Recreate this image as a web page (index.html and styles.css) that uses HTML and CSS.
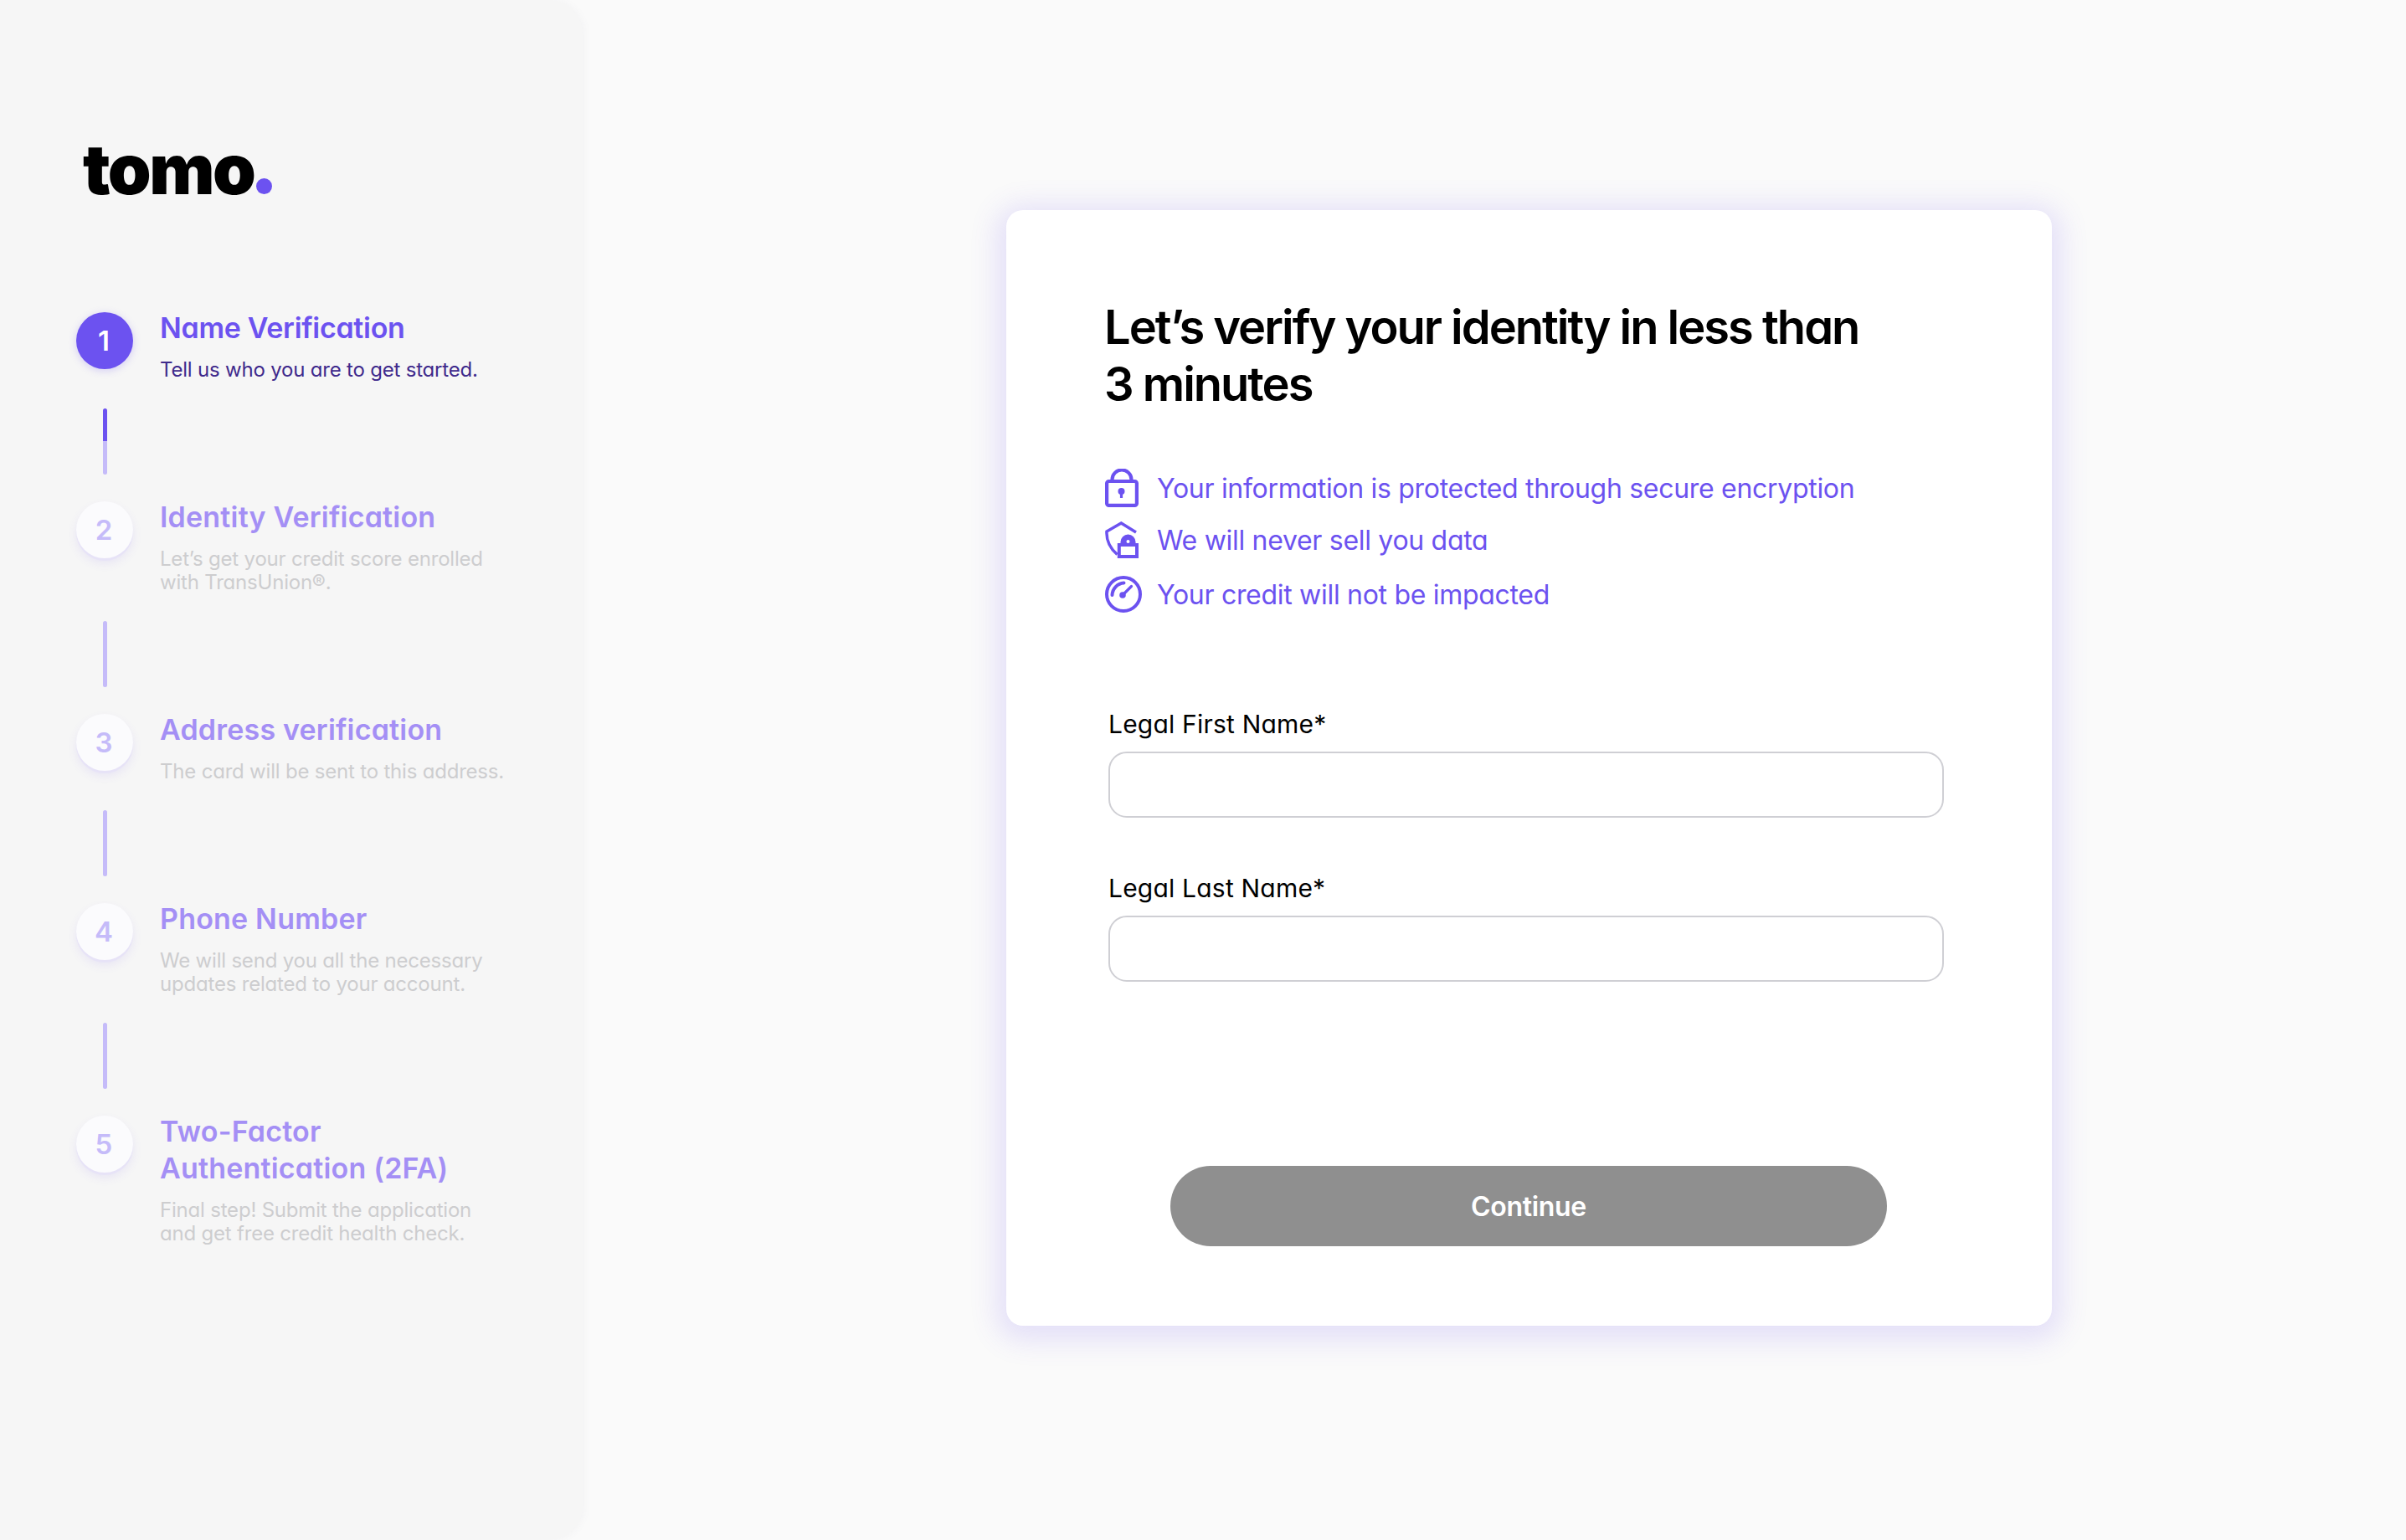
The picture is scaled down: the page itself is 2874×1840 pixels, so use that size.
FILE: index.html
```html
<!doctype html>
<html lang="en">
  <head>
    <meta charset="UTF-8" />
    <meta name="viewport" content="width=device-width, initial-scale=1.0" />
    <title>tomo</title>
    <link rel="stylesheet" href="styles.css">
  </head>

  <body>
    <aside class="sidebar">
      <div class="logo">tomo<span class="logo-dot"></span></div>

      <div class="step step-active">
        <div class="step-num">1</div>
        <div>
          <div class="step-title">Name Verification</div>
          <div class="step-sub">Tell us who you are to get started.</div>
        </div>
      </div>
      <div class="line line-half"></div>

      <div class="step">
        <div class="step-num">2</div>
        <div>
          <div class="step-title">Identity Verification</div>
          <div class="step-sub">Let’s get your credit score enrolled<br>with TransUnion®.</div>
        </div>
      </div>
      <div class="line"></div>

      <div class="step">
        <div class="step-num">3</div>
        <div>
          <div class="step-title">Address verification</div>
          <div class="step-sub">The card will be sent to this address.</div>
        </div>
      </div>
      <div class="line"></div>

      <div class="step">
        <div class="step-num">4</div>
        <div>
          <div class="step-title">Phone Number</div>
          <div class="step-sub">We will send you all the necessary<br>updates related to your account.</div>
        </div>
      </div>
      <div class="line"></div>

      <div class="step">
        <div class="step-num">5</div>
        <div>
          <div class="step-title">Two-Factor<br>Authentication (2FA)</div>
          <div class="step-sub">Final step! Submit the application<br>and get free credit health check.</div>
        </div>
      </div>
    </aside>

    <main class="card">
      <h1 class="heading">Let’s verify your identity in less than<br>3 minutes</h1>

      <ul class="perks">
        <li class="perk">
          <svg class="icon" width="40" height="46" viewBox="0 0 40 46" fill="none" stroke="#6c52f0" stroke-width="4.2">
            <rect x="2.1" y="15" width="35.800" height="28.900" rx="2.500" />
            <path d="M8.500 15v-2a11.500 11.500 0 0 1 23 0v2" />
            <circle cx="19.500" cy="27" r="4" fill="#6c52f0" stroke="none" />
            <path d="M19.500 28v7" stroke-width="3.200" />
          </svg>
          Your information is protected through secure encryption
        </li>
        <li class="perk">
          <svg class="icon" width="40" height="44" viewBox="0 0 40 44" fill="none" stroke="#6c52f0" stroke-width="3.500">
            <path d="M37 13 19.300 2 2 12c-.6 10.500 4 20 12.500 27.500" />
            <path d="M16.800 28h21.200v14h-21.200z" stroke-width="4" />
            <path d="M20 28v-3.500a7.500 7.500 0 0 1 15 0V28z" fill="#6c52f0" stroke-width="3" />
            <circle cx="27.500" cy="24" r="2" fill="#fff" stroke="none" />
          </svg>
          We will never sell you data
        </li>
        <li class="perk perk-last">
          <svg class="icon" width="44" height="44" viewBox="0 0 44 44" fill="none" stroke="#6c52f0" stroke-width="4" stroke-linecap="round">
            <circle cx="22" cy="22" r="20" />
            <path d="M8.500 23A15 15 0 0 1 22.500 8.500" />
            <path d="M21 23 31.500 12.500" stroke-width="3.200" />
            <circle cx="21" cy="23" r="3.800" fill="#6c52f0" stroke="none" />
          </svg>
          Your credit will not be impacted
        </li>
      </ul>

      <form class="form">
        <label class="label" for="first">Legal First Name*</label>
        <input class="input" id="first" type="text">
        <label class="label" for="last">Legal Last Name*</label>
        <input class="input" id="last" type="text">
        <button class="btn" type="button">Continue</button>
      </form>
    </main>
  </body>
</html>
```

FILE: styles.css
```css
* {
  box-sizing: border-box;
  font-family: "Inter", "Liberation Sans", sans-serif;
  font-feature-settings: "cv11" 1;
}

html,
body {
  margin: 0;
  height: 100%;
}

body {
  display: flex;
  align-items: flex-start;
  background-color: #fafafa;
  overflow: hidden;
}

.sidebar {
  flex: none;
  width: 696px;
  height: 1840px;
  padding: 172px 0 0 91px;
  background-color: #f6f6f6;
  border-radius: 0 40px 40px 0;
  box-shadow: 2px 0 8px rgba(120, 120, 140, 0.05);
}

.logo {
  margin: 0 0 138px 8px;
  font-size: 83px;
  line-height: 60px;
  font-weight: 900;
  letter-spacing: -2.5px;
  color: #000;
}

/* the dot of the logo is a shape, it sits on the baseline */
.logo-dot {
  display: inline-block;
  width: 19px;
  height: 19px;
  margin-left: 3px;
  border-radius: 50%;
  background-color: #6c52f0;
}

.step {
  display: grid;
  grid-template-columns: 68px 1fr;
  column-gap: 32px;
}

.step-num {
  width: 68px;
  height: 68px;
  margin-top: 3px;
  border-radius: 50%;
  background-color: #fbfbfd;
  box-shadow: 0 3px 0 #e7e3f7, 0 6px 12px rgba(108, 82, 240, 0.1);
  display: flex;
  align-items: center;
  justify-content: center;
  padding-right: 2px;
  font-size: 33px;
  font-weight: 600;
  color: #c5bbf9;
}

.step-title {
  font-size: 34px;
  line-height: 44px;
  font-weight: 600;
  letter-spacing: 0.2px;
  color: #a48ff5;
}

.step-sub {
  margin-top: 14px;
  font-size: 24px;
  line-height: 28px;
  letter-spacing: -0.2px;
  color: #cdcdcf;
}

.step-active .step-num {
  background-color: #6c52f0;
  box-shadow: 0 2px 10px rgba(108, 82, 240, 0.25);
  color: #fff;
}

.step-active .step-title {
  letter-spacing: -0.3px;
  color: #6c52f0;
}

.step-active .step-sub {
  color: #3f2a8c;
}

.line {
  width: 5px;
  height: 79px;
  margin: 32px 0 29px 32px;
  border-radius: 3px;
  background-color: #c5bbf9;
}

.line-half {
  background: linear-gradient(#6c52f0 50%, #c5bbf9 50%);
}

.card {
  flex: none;
  width: 1249px;
  height: 1333px;
  margin: 251px 0 0 506px;
  padding: 106px 0 0 117px;
  background-color: #fff;
  border-radius: 20px;
  box-shadow: 0 6px 32px 12px rgba(108, 82, 240, 0.15);
}

.heading {
  margin: 0;
  font-size: 56px;
  line-height: 68px;
  font-weight: 600;
  letter-spacing: -2px;
  color: #000;
}

.perks {
  display: flex;
  flex-direction: column;
  gap: 17px;
  margin: 67px 0 0 1px;
  padding: 0;
  list-style: none;
}

.perk {
  display: flex;
  align-items: center;
  font-size: 32px;
  letter-spacing: -0.3px;
  color: #6c52f0;
}

.perk-last {
  margin-top: 4px;
}

.icon {
  flex: none;
  margin-right: 22px;
}

.perk-last .icon {
  margin-right: 18px;
}

.form {
  display: flex;
  flex-direction: column;
  width: 998px;
  margin: 115px 0 0 5px;
}

.label {
  margin-bottom: 15px;
  font-size: 30px;
  line-height: 36px;
  letter-spacing: 0.2px;
  color: #000;
}

.input {
  width: 998px;
  height: 79px;
  margin-bottom: 66px;
  border: 2px solid #cfcfd4;
  border-radius: 22px;
  background-color: #fff;
}

.btn {
  width: 856px;
  height: 96px;
  margin: 154px 0 0 74px;
  border: none;
  border-radius: 48px;
  background-color: #8f8f8f;
  font-size: 32px;
  font-weight: 600;
  letter-spacing: -0.3px;
  color: #fff;
}
```
